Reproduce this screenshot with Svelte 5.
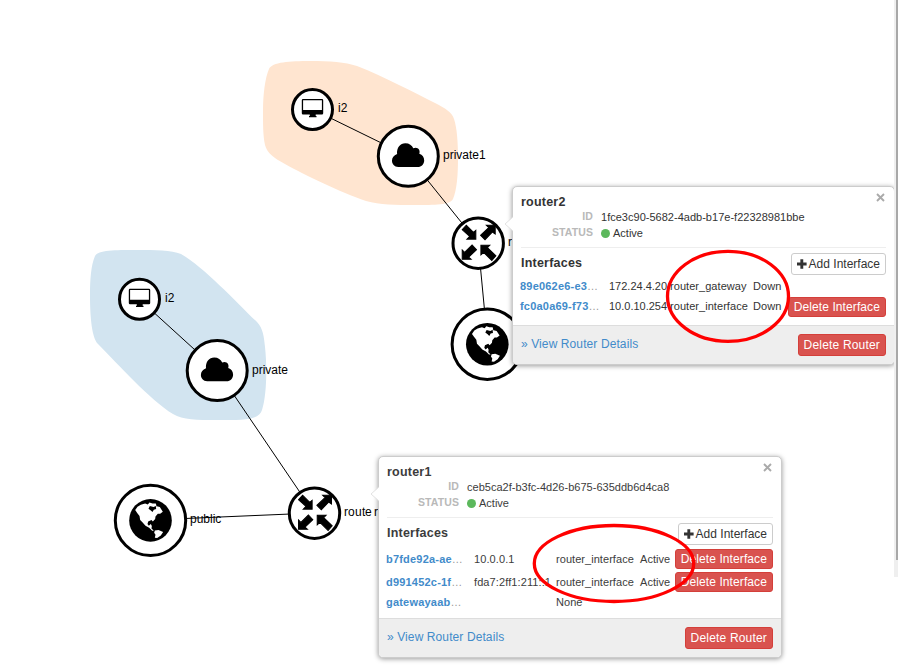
<script>
  const links = [
    [312, 109, 408, 156], [408, 156, 478, 243], [480.5, 268, 484.5, 310],
    [139, 299, 217, 370], [217, 370, 314, 513], [150, 520, 314, 513]
  ];
  const nodes = [
    { kind: 'instance', x: 312.5, y: 109.5, r: 20, label: 'i2', tx: 338, ty: 112 },
    { kind: 'network', x: 408.3, y: 156.3, r: 30, label: 'private1', tx: 443, ty: 159 },
    { kind: 'router', x: 478.2, y: 243.2, r: 25.2, label: 'router2', tx: 508, ty: 246 },
    { kind: 'globe', x: 487.3, y: 344.2, r: 35.2, label: '', tx: 0, ty: 0 },
    { kind: 'instance', x: 139.5, y: 299.2, r: 20, label: 'i2', tx: 165, ty: 302 },
    { kind: 'network', x: 217.2, y: 370.6, r: 30, label: 'private', tx: 252, ty: 374 },
    { kind: 'globe', x: 150.5, y: 520.4, r: 35.2, label: 'public', tx: 190, ty: 523 },
    { kind: 'router', x: 314.5, y: 513.2, r: 25.2, label: 'router', tx: '344 348 355 362 365 374', ty: 516 }
  ];
  const popovers = [
    {
      cls: 'second', name: 'router2', id: '1fce3c90-5682-4adb-b17e-f22328981bbe',
      rows: [
        { name: '89e062e6-e3', ip: '172.24.4.20', type: 'router_gateway', status: 'Down', del: false },
        { name: 'fc0a0a69-f73', ip: '10.0.10.254', type: 'router_interface', status: 'Down', del: true }
      ]
    },
    {
      cls: 'first', name: 'router1', id: 'ceb5ca2f-b3fc-4d26-b675-635ddb6d4ca8',
      rows: [
        { name: 'b7fde92a-ae', ip: '10.0.0.1', type: 'router_interface', status: 'Active', del: true },
        { name: 'd991452c-1f', ip: 'fda7:2ff1:211::1', type: 'router_interface', status: 'Active', del: true },
        { name: 'gatewayaab', ip: '', type: 'None', status: '', del: false }
      ]
    }
  ];
</script>

<main>
  <svg class="graph" width="898" height="669" viewBox="0 0 898 669">
    <path fill="#ffe5d0" d="M263 110C263 95 265 78 269 69C272 62 290 61 310 61C330 61 345 62 357 66C385 77 415 93 435 103C446 109 452 112 454 119C457 128 458 142 458 158C458 174 457 190 453 199C450 205 435 205 415 205C395 205 380 205 366 201C340 192 305 175 285 164C274 158 267 153 265 145C263 135 263 125 263 110Z" />
    <path fill="#d2e4f0" d="M90 295C90 280 91 265 95 256C98 250 115 250 136 250C156 250 171 250 181 254C205 268 236 302 257 322C263 328 264 337 265 347C267 365 267 395 262 410C259 420 245 420 217 420C197 420 183 420 173 414C150 400 118 364 98 344C92 338 90 318 90 295Z" />
    {#each links as [x1, y1, x2, y2]}
      <line {x1} {y1} {x2} {y2} stroke="#000" stroke-width="1" />
    {/each}
    {#each nodes as n}
      <g transform="translate({n.x} {n.y})">
        <circle r={n.r} fill="#fff" stroke="#000" stroke-width="3" />
        {#if n.kind === 'instance'}
          <path fill-rule="evenodd" d="M-9.5-10.5H9.5Q10.7-10.5 10.7-9.3V3.8Q10.7 5 9.5 5H3.2V6.5H4V7.7H-3.5V6.5H-2.7V5H-9.5Q-10.7 5-10.7 3.8V-9.3Q-10.7-10.5-9.5-10.5ZM-9.4-9.2V.6H9.4V-9.2Z" />
        {:else if n.kind === 'network'}
          <path d="M-10 10.7C-14 10.7-16.3 7.7-16.3 4.5C-16.3 1.2-14.5-1-11.2-2.3C-11.8-8.5-8-13-3-13C1-13 3.7-11 5-8C9-10 12.5-6.5 11-2.5C14.2-1.5 15.9 1 15.9 4.2C15.9 8 13 10.7 9.5 10.7Z" />
        {:else if n.kind === 'router'}
          <g transform="scale(.34)">
            <path stroke="#000" stroke-width="3" d="M-7-12H-33L-25-20L-47-40L-35-53L-14-32L-7-38ZM50-53V-27L42-33L20-10L7-23L31-46L24-53ZM-47 47V20L-40 27L-18 5L-5 19L-28 41L-21 47ZM8 6H34L27 13L52 37L40 51L16 27L8 34Z" />
          </g>
        {:else}
          <g transform="scale(.333)">
            <circle r="64" />
            <path fill="#fff" d="M-46-31L-39-41L-29-47L-16-51L-8-48L-3-54L6-51L16-51L18-44L9-40L-2-43L-6-35L1-30L6-25L10-32L17-34L16-43L28-40L37-26L29-20L22-20L15-12L14-4L7 3L3-1L-7 3L-9 11L-5 16L1 11L4 17L3 24L10 31L5 31L-4 22L-15 16L-25 5L-31-1L-33-13L-40-22ZM13 30L24 29L38 35L31 45L20 53L13 52L15 43L11 37Z" />
          </g>
        {/if}
      </g>
      <text x={n.tx} y={n.ty}>{n.label}</text>
    {/each}
  </svg>

  {#each popovers as p}
    <section class="popover {p.cls}">
      <svg class="tip" width="9" height="16" viewBox="0 0 9 16"><path d="M9 1L1 8L9 15" fill="#fff" stroke="#e2e2e2" /></svg>
      <div class="body">
        <header><strong>{p.name}</strong>
          <button class="close" aria-label="Close"><svg width="9" height="9" viewBox="0 0 9 9"><path d="M1 1L8 8M8 1L1 8" stroke="#aaa" stroke-width="1.9" /></svg></button>
        </header>
        <dl>
          <dt>ID</dt><dd>{p.id}</dd>
          <dt>STATUS</dt><dd class="state"><i></i>Active</dd>
        </dl>
        <div class="head">
          <strong>Interfaces</strong>
          <button class="btn add"><svg width="10" height="10" viewBox="0 0 10 10"><path d="M5 0V10M0 5H10" stroke="#333" stroke-width="3" /></svg>Add Interface</button>
        </div>
        <div class="rows">
          {#each p.rows as r}
            <div class="row">
              <span class="name"><b>{r.name}</b>…</span>
              <span class="ip">{r.ip}</span>
              <span class="type">{r.type}</span>
              <span>{r.status}</span>
              {#if r.del}<button class="btn danger small">Delete Interface</button>{/if}
            </div>
          {/each}
        </div>
      </div>
      <footer><span class="details">» View Router Details</span><button class="btn danger router">Delete Router</button></footer>
    </section>
  {/each}

  <svg class="marks" width="898" height="669" viewBox="0 0 898 669">
    <ellipse cx="728" cy="296.3" rx="60.5" ry="45" />
    <ellipse cx="614" cy="563.5" rx="79.7" ry="38" />
  </svg>
  <div class="scroll"><div></div></div>
</main>

<style>
  :global(body) { background: #fff; overflow: hidden; }
  main { position: relative; width: 898px; height: 669px; overflow: hidden; font: 11px "Liberation Sans", Arial, sans-serif; color: #333; }
  .graph, .marks { position: absolute; left: 0; top: 0; }
  .graph text { font-size: 12px; fill: #000; }
  .marks { pointer-events: none; }
  ellipse { fill: none; stroke: #f00; stroke-width: 3.3; }
  .popover { position: absolute; box-sizing: border-box; display: flex; flex-direction: column; background: #fff; border: 1px solid #ccc; border-radius: 5px; box-shadow: 0 1px 5px rgba(0,0,0,.4); }
  .second { left: 512px; top: 186px; width: 383px; height: 179px; }
  .first { left: 378px; top: 456px; width: 404px; height: 202px; color: #3c3c3c; }
  .tip { position: absolute; left: -9px; top: 29px; }
  .body { flex: 1; padding: 9px 8px 0; display: flex; flex-direction: column; }
  header { display: flex; justify-content: space-between; height: 13px; line-height: 13px; font-size: 12px; }
  strong { font-size: 12.5px; letter-spacing: .22px; }
  header .close { border: 0; padding: 0; margin: -3px 1px 0 0; height: 9px; background: none; display: flex; }
  dl { display: grid; grid-template-columns: 72px 1fr; column-gap: 8px; margin: 0; height: 39px; grid-auto-rows: 16px; line-height: 16px; border-bottom: 1px solid #eee; box-sizing: border-box; }
  dt { text-align: right; font-weight: bold; color: #b9b9b9; font-size: 10.5px; letter-spacing: .1px; margin-top: -1px; }
  dd { margin: 0; white-space: nowrap; }
  dd:not(.state) { letter-spacing: .015px; }
  .state { display: flex; align-items: center; gap: 3px; margin-top: -1px; }
  .state i { width: 9px; height: 9px; border-radius: 50%; background: #5cb85c; margin-top: 2px; }
  .head { display: flex; align-items: center; justify-content: space-between; height: 29px; }
  .head .btn { margin-top: 3px; }
  .btn { box-sizing: border-box; height: 22px; border: 1px solid #ccc; border-radius: 3px; background: #fff; color: #333; font: 12px "Liberation Sans", Arial, sans-serif; letter-spacing: .1px; padding: 0 5px; display: flex; align-items: center; gap: 2px; white-space: nowrap; }
  .add { letter-spacing: 0; width: 95px; }
  .danger { color: #fff; background: #d9534f; border-color: #d43f3a; }
  .small { height: 20px; margin-left: auto; }
  .router { letter-spacing: .18px; }
  .row { display: flex; align-items: center; height: 20px; white-space: nowrap; letter-spacing: .05px; }
  .row span { flex: none; }
  .row .name { width: 89px; margin-left: -1px; color: #999; letter-spacing: .2px; }
  .name b { color: #428bca; }
  .row .ip { width: 61px; letter-spacing: 0; }
  .row .type { width: 83px; }
  .first .row { height: 23px; }
  .first .row:last-child { height: 18px; }
  .first .row .name { width: 88px; }
  .first .row .ip { width: 82px; letter-spacing: .1px; }
  .first .row .type { width: 84px; }
  .second .row > span { position: relative; top: -1px; }
  footer { height: 38px; border-top: 1px solid #ddd; background: #eee; border-radius: 0 0 4px 4px; display: flex; justify-content: space-between; align-items: center; padding: 0 8px; }
  .details { color: #428bca; font-size: 12px; letter-spacing: .1px; margin-bottom: 2px; }
  .scroll { position: absolute; right: 0; top: 0; width: 4px; height: 577px; background: #efefef; display: flex; justify-content: flex-end; }
  .scroll div { width: 2px; height: 560px; background: #a8a8a8; }
</style>
